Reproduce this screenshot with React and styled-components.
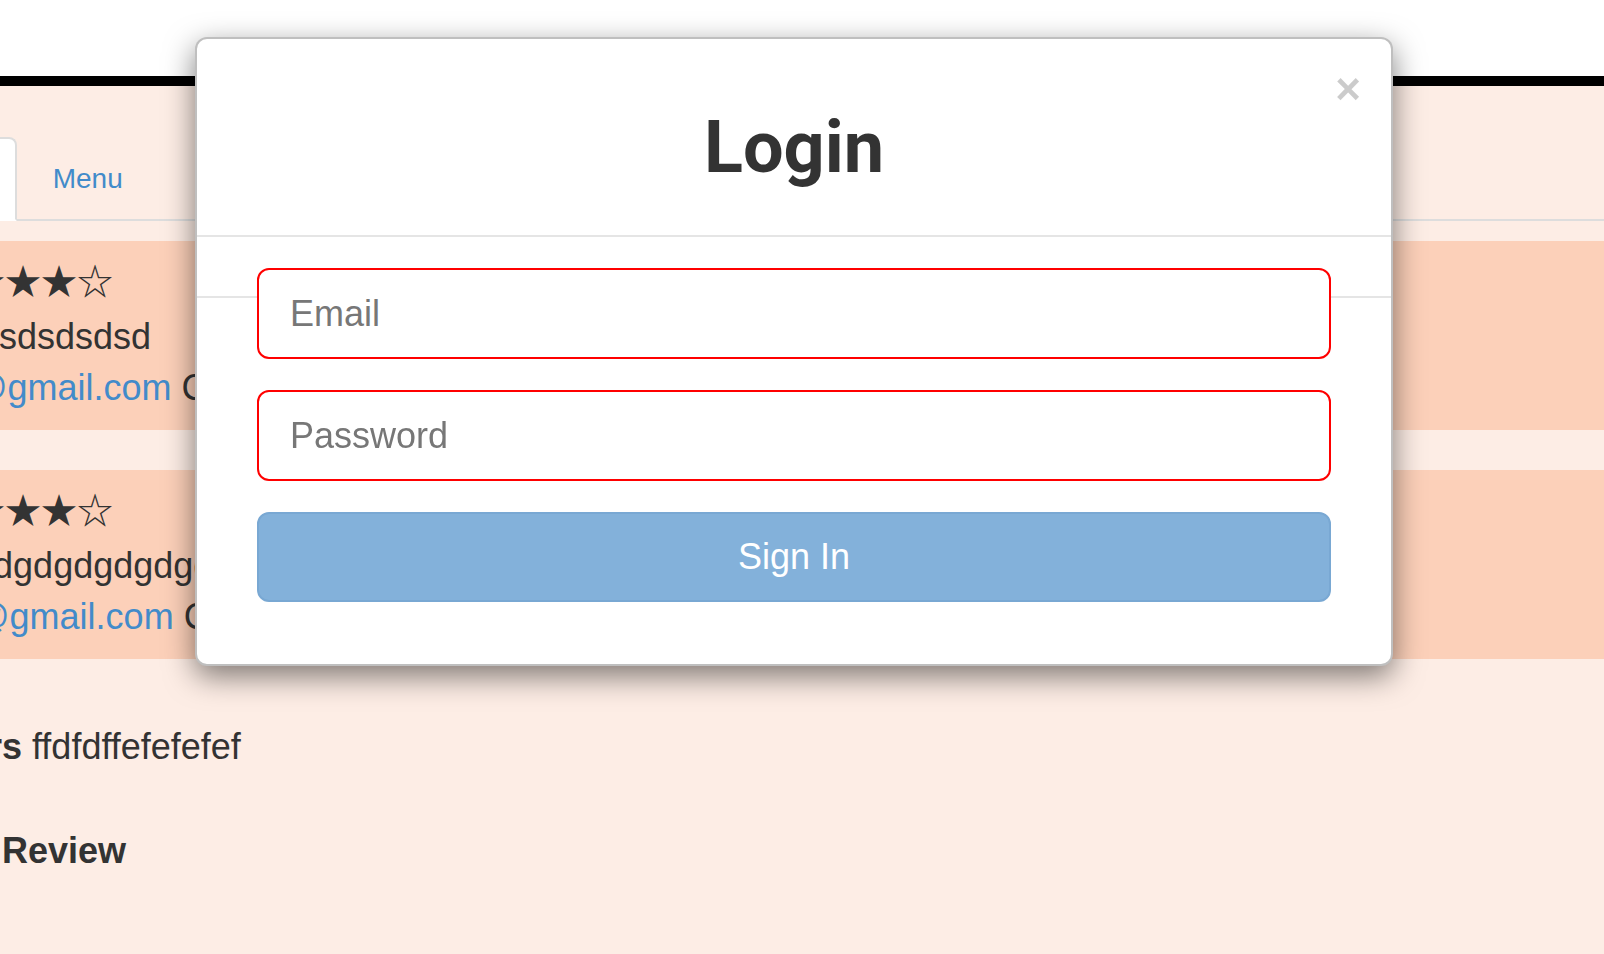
import React from "react";
import styled, { createGlobalStyle } from "styled-components";

const GlobalStyle = createGlobalStyle`
  html, body {
    margin: 0;
    padding: 0;
    background: #fdede5;
    overflow: hidden;
  }
  body {
    font-family: "Liberation Sans", Arial, sans-serif;
    color: #333;
  }
  * {
    box-sizing: border-box;
  }
`;

const TopBar = styled.div`
  height: 86px;
  background: #fff;
  border-bottom: 10px solid #000;
`;

// the page is scrolled sideways, so everything starts left of the window
const Page = styled.div`
  margin-left: -82px;
  padding-top: 51px;
`;

const Tabs = styled.ul`
  display: flex;
  list-style: none;
  margin: 0 0 0 -12px;
  padding: 0;
  border-bottom: 2px solid #ddd;
`;

const Tab = styled.li`
  margin-bottom: -2px;
  margin-right: 4px;
  padding: 20px 30px;
  font-size: 28px;
  line-height: 40px;
  border: 2px solid ${(p) => (p.active ? "#ddd" : "transparent")};
  border-bottom-color: ${(p) => (p.active ? "#fff" : "transparent")};
  border-radius: 8px 8px 0 0;
  background: ${(p) => (p.active ? "#fff" : "transparent")};
  color: ${(p) => (p.active ? "#555" : "#428bca")};
`;

const Reviews = styled.div`
  display: flex;
  flex-direction: column;
  gap: 40px;
  margin-top: 20px;
`;

const Card = styled.div`
  background: #fcd0b9;
  padding: 19px 15px 17px;
  font-size: 36px;
  line-height: 51px;
  white-space: nowrap;
`;

const Line = styled.div`
  height: 51px;
`;

const Stars = styled.div`
  height: 51px;
  font-family: "Noto Sans CJK JP", "DejaVu Sans", sans-serif;
  font-size: 36px;
  line-height: 38px;
  color: #333;
`;

const Mail = styled.a`
  color: #428bca;
  text-decoration: none;
`;

const Info = styled.p`
  margin: 62px 0 0;
  font-size: 36px;
  line-height: 51px;
  white-space: nowrap;
`;

const Heading = styled.h4`
  margin: 59px 0 0;
  font-size: 36px;
  line-height: 40px;
  font-weight: bold;
`;

const Overlay = styled.div`
  position: fixed;
  inset: 0;
  display: flex;
  align-items: flex-start;
  padding: 37px 0 0 195px;
`;

const Modal = styled.div`
  position: relative;
  width: 1198px;
  background: #fff;
  border: 2px solid rgba(0, 0, 0, 0.25);
  border-radius: 12px;
  box-shadow: 0 10px 30px rgba(0, 0, 0, 0.5);
`;

const ModalHeader = styled.div`
  padding: 69px 30px 48px;
  border-bottom: 2px solid #e5e5e5;
  text-align: center;
`;

const Title = styled.h1`
  margin: 0;
  font-family: Roboto, "Liberation Sans", sans-serif;
  font-size: 72px;
  line-height: 79px;
  font-weight: 700;
  color: #333;
`;

const Close = styled.button`
  position: absolute;
  top: 28px;
  right: 30px;
  padding: 0;
  border: 0;
  background: none;
  font-family: "Liberation Sans", Arial, sans-serif;
  font-size: 44px;
  font-weight: bold;
  line-height: 1;
  color: #000;
  opacity: 0.2;
`;

const ModalBody = styled.form`
  position: relative;
  display: flex;
  flex-direction: column;
  gap: 31px;
  padding: 31px 60px 62px;

  &::before {
    content: "";
    position: absolute;
    top: 59px;
    left: 0;
    right: 0;
    height: 2px;
    background: #e5e5e5;
  }
`;

const Input = styled.input`
  position: relative;
  height: 91px;
  padding: 0 31px;
  border: 2px solid #f00;
  border-radius: 12px;
  background: #fff;
  font-family: "Liberation Sans", Arial, sans-serif;
  font-size: 36px;
  color: #555;
  outline: none;

  &::placeholder {
    color: #777;
  }
`;

const Button = styled.button`
  height: 90px;
  border: 2px solid #79a8d3;
  border-radius: 12px;
  background: #83b1da;
  color: #fff;
  font-family: "Liberation Sans", Arial, sans-serif;
  font-size: 36px;
`;

const reviews = [
  { stars: "★★★★☆", text: "Re: sdsdsdsd", mail: "sd@gmail.com", note: " Commented" },
  { stars: "★★★★☆", text: "gdgdgdgdgdgdgdgdgdg", mail: "dg@gmail.com", note: " Commented" },
];

export default function App() {
  return (
    <>
      <GlobalStyle />
      <TopBar />
      <Page>
        <Tabs>
          <Tab active>Info</Tab>
          <Tab>Menu</Tab>
        </Tabs>
        <Reviews>
          {reviews.map((r, i) => (
            <Card key={i}>
              <Stars>{r.stars}</Stars>
              <Line>{r.text}</Line>
              <Line>
                <Mail href="#">{r.mail}</Mail>
                {r.note}
              </Line>
            </Card>
          ))}
        </Reviews>
        <Info>
          <b>Hours</b> ffdfdffefefefef
        </Info>
        <Heading>New Review</Heading>
      </Page>
      <Overlay>
        <Modal>
          <Close type="button">×</Close>
          <ModalHeader>
            <Title>Login</Title>
          </ModalHeader>
          <ModalBody onSubmit={(e) => e.preventDefault()}>
            <Input type="email" placeholder="Email" />
            <Input type="password" placeholder="Password" />
            <Button type="submit">Sign In</Button>
          </ModalBody>
        </Modal>
      </Overlay>
    </>
  );
}
